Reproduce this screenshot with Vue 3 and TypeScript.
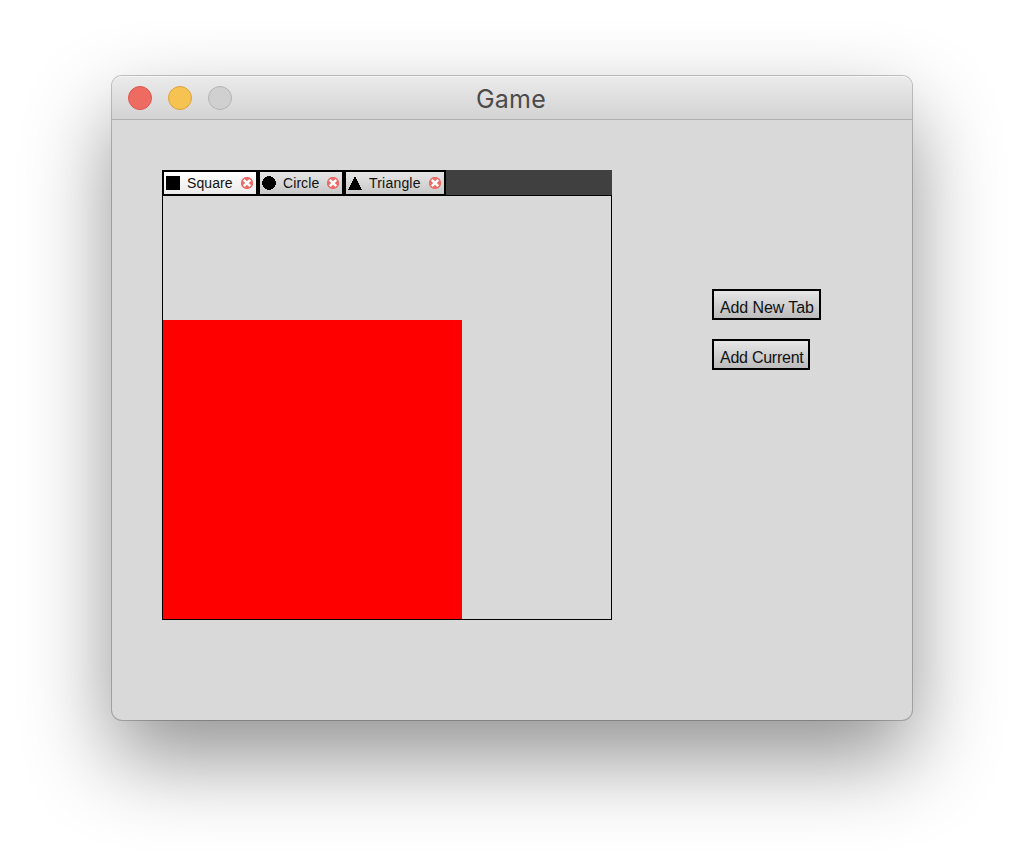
<script setup lang="ts">
import { ref } from 'vue'

type Shape = 'square' | 'circle' | 'triangle'

interface Tab {
  name: string
  shape: Shape
}

const tabs = ref<Tab[]>([
  { name: 'Square', shape: 'square' },
  { name: 'Circle', shape: 'circle' },
  { name: 'Triangle', shape: 'triangle' },
])
const current = ref<Shape>('square')
</script>

<template>
  <div class="desktop">
    <div class="window">
      <header class="titlebar">
        <div class="lights">
          <span class="light close"></span>
          <span class="light minimise"></span>
          <span class="light disabled"></span>
        </div>
        <h1 class="title">Game</h1>
      </header>
      <main class="content">
        <section class="panel">
          <nav class="tabbar">
            <div
              v-for="tab in tabs"
              :key="tab.shape"
              class="tab"
              :class="[tab.shape, { active: tab.shape === current }]"
              @click="current = tab.shape"
            >
              <svg class="shape" width="14" height="14" viewBox="0 0 14 14" shape-rendering="crispEdges">
                <rect v-if="tab.shape === 'square'" width="14" height="14" />
                <path v-else-if="tab.shape === 'circle'" d="M5 0H9V1H11V2H12V3H13V5H14V9H13V11H12V12H11V13H9V14H5V13H3V12H2V11H1V9H0V5H1V3H2V2H3V1H5Z" />
                <path v-else d="M7 0L14 14H0Z" />
              </svg>
              <span class="label">{{ tab.name }}</span>
              <svg class="dismiss" width="12" height="12" viewBox="0 0 12 12">
                <circle cx="6" cy="6" r="6.1" fill="#ed6a66" />
                <path d="M2.8 2.8L9.2 9.2M9.2 2.8L2.8 9.2" stroke="#fff" stroke-width="2.5" />
              </svg>
            </div>
          </nav>
          <div class="stage">
            <div class="red-square"></div>
          </div>
        </section>
        <aside class="actions">
          <button class="action add-new"><span>Add New Tab</span></button>
          <button class="action add-current"><span>Add Current</span></button>
        </aside>
      </main>
    </div>
  </div>
</template>

<style>
body {
  background: #fff;
}
</style>

<style scoped>
.desktop {
  box-sizing: border-box;
  height: 868px;
  padding: 76px 112px 0;
  overflow: hidden;
  background: #fff;
}
.window {
  width: 800px;
  height: 644px;
  border-radius: 10px;
  background: #d9d9d9;
  box-shadow: 0 0 0 1px rgba(0, 0, 0, 0.22), 0 38px 86px rgba(0, 0, 0, 0.43);
}
.titlebar {
  box-sizing: border-box;
  display: grid;
  grid-template-columns: 1fr auto 1fr;
  align-items: center;
  height: 44px;
  padding: 0 16px;
  border-bottom: 1px solid #b0b0b0;
  border-radius: 10px 10px 0 0;
  background: linear-gradient(#ebebeb, #d3d3d3);
  box-shadow: inset 0 1px #f5f5f5;
}
.lights {
  display: flex;
  gap: 16px;
}
.light {
  box-sizing: border-box;
  width: 24px;
  height: 24px;
  border: 1px solid;
  border-radius: 50%;
}
.close {
  background: #ed6b60;
  border-color: #db574e;
}
.minimise {
  background: #f6c251;
  border-color: #dda33c;
}
.disabled {
  background: #d0d0d0;
  border-color: #b3b3b3;
}
.title {
  margin: 3px 2px 0 0;
  font: 400 25px/30px Inter, sans-serif;
  letter-spacing: 0.2px;
  color: #4b4b4b;
}
.content {
  display: flex;
  gap: 100px;
  padding: 50px 50px 0;
}
.panel {
  width: 450px;
}
.tabbar {
  display: flex;
  height: 25px;
  background: #404040;
}
.tab {
  box-sizing: border-box;
  display: flex;
  align-items: center;
  height: 26px;
  padding: 0 3px 0 2px;
  border: 2px solid #000;
  background: linear-gradient(#e6e6e6, #c8c8c8);
}
.tab.active {
  background: linear-gradient(#fff, #ebebeb);
}
.tab.square {
  width: 96px;
}
.tab.circle {
  width: 86px;
}
.tab.triangle {
  width: 102px;
}
.shape {
  flex: none;
}
.label {
  margin-left: 7px;
  font: 14px/16px "Liberation Sans", Arial, sans-serif;
  letter-spacing: 0.08px;
  white-space: nowrap;
  color: #111;
}
.triangle .label {
  letter-spacing: 0.2px;
}
.dismiss {
  flex: none;
  margin-left: auto;
}
.stage {
  box-sizing: border-box;
  display: flex;
  align-items: flex-end;
  height: 425px;
  border: 1px solid #000;
}
.red-square {
  width: 299px;
  height: 299px;
  background: #f00;
}
.actions {
  display: flex;
  flex-direction: column;
  align-items: flex-start;
  gap: 19px;
  padding-top: 119px;
}
.action {
  box-sizing: border-box;
  height: 31px;
  padding: 6px 0 0 6px;
  border: 2px solid #000;
  border-radius: 0;
  background: linear-gradient(#e6e6e6, #bcbcbc);
  font: 16px/22px "Liberation Sans", Arial, sans-serif;
  letter-spacing: -0.1px;
  text-align: left;
  white-space: nowrap;
  color: #111;
}
.add-new {
  width: 109px;
}
.add-current {
  width: 98px;
  letter-spacing: -0.25px;
}
</style>
